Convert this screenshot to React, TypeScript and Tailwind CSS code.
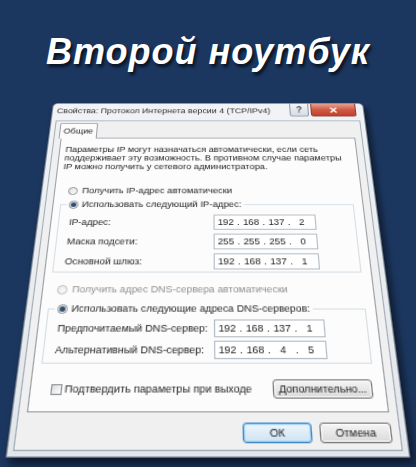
import React from "react";

function Radio({ checked = false, disabled = false }: { checked?: boolean; disabled?: boolean }) {
  return (
    <span
      className={
        "shrink-0 w-[9px] h-[9px] rounded-full border flex items-center justify-center bg-gradient-to-br " +
        (disabled ? "border-[#b8bcc0] from-[#ececec] to-[#fafafa]" : "border-[#8a9096] from-[#dedede] to-[#ffffff]")
      }
    >
      {checked && <span className="w-[5px] h-[5px] rounded-full bg-[#2f4f6f]" />}
    </span>
  );
}

function IpBox({ parts }: { parts: string[] }) {
  return (
    <div className="w-[93px] h-[16px] border border-[#b4bcc4] bg-white flex items-center pl-[1px] text-[#222]">
      {parts.map((p, i) => (
        <React.Fragment key={i}>
          <span className="w-[18px] text-center">{p}</span>
          {i < 3 && <span className="w-[5px] text-center">.</span>}
        </React.Fragment>
      ))}
    </div>
  );
}

function Row({ label, parts }: { label: string; parts: string[] }) {
  return (
    <div className="flex items-center h-[16px]">
      <span className="w-[131px] shrink-0">{label}</span>
      <IpBox parts={parts} />
    </div>
  );
}

function WinButton({ children, w, def = false }: { children: React.ReactNode; w: string; def?: boolean }) {
  return (
    <div
      className={
        "h-[16px] rounded-[3px] border flex items-center justify-center bg-gradient-to-b " +
        w +
        (def
          ? " border-[#3d86c6] from-[#eef6fc] to-[#cfe3f3] shadow-[inset_0_0_0_1px_#a8d8f5]"
          : " border-[#7a7a7a] from-[#f5f5f5] to-[#dadada] shadow-[inset_0_0_0_1px_#fbfbfb]")
      }
    >
      {children}
    </div>
  );
}

function Dialog() {
  return (
    <div className="w-[310px] h-[347px] shrink-0 origin-top [transform:perspective(921px)_rotateX(38.5deg)] flex flex-col border border-[#7f8a96] rounded-t-[5px] bg-gradient-to-b from-[#f1f3f6] to-[#e3e7eb] shadow-[3px_5px_6px_rgba(0,0,0,0.55)] font-['Liberation_Sans',Arial,sans-serif] text-[8.8px] leading-[12px] text-[#1c1c1c]">
      {/* title bar */}
      <div className="h-[21px] shrink-0 flex items-start">
        <span className="pl-[4px] pt-[3px] text-[#2a2a2a]">Свойства: Протокол Интернета версии 4 (TCP/IPv4)</span>
        <div className="ml-auto mr-[7px] flex gap-[2px]">
          <div className="w-[19px] h-[16px] rounded-b-[3px] border border-t-0 border-[#8d96a0] bg-gradient-to-b from-[#f4f6f8] to-[#d6dce2] flex items-center justify-center text-[10px] font-bold text-[#4a5560]">
            ?
          </div>
          <div className="w-[45px] h-[16px] rounded-b-[3px] border border-t-0 border-[#8e3b30] bg-gradient-to-b from-[#e7a190] via-[#cf5a45] to-[#c2402b] flex items-center justify-center text-[11px] font-bold text-white">
            ✕
          </div>
        </div>
      </div>

      {/* client */}
      <div className="mx-[4px] mb-[4px] flex-1 bg-[#f0f0f0] border border-[#a3adb8] px-[6px] pt-[2px] flex flex-col">
        <div className="flex h-[18px] relative z-10">
          <div className="-ml-[2px] w-[37px] h-[19px] bg-[#fcfcfc] border border-b-0 border-[#9aa0a6] rounded-t-[2px] flex items-center justify-center">
            Общие
          </div>
        </div>
        <div className="h-[269px] shrink-0 bg-[#fcfcfc] border border-[#9aa0a6] flex flex-col">
          <div className="pl-[5px] pt-[8px] leading-[10px]">
            <div>Параметры IP могут назначаться автоматически, если сеть</div>
            <div>поддерживает эту возможность. В противном случае параметры</div>
            <div>IP можно получить у сетевого администратора.</div>
          </div>

          <div className="mt-[16px] h-[12px] flex items-center pl-[12px] gap-[4px]">
            <Radio />
            <span>Получить IP-адрес автоматически</span>
          </div>

          <fieldset className="ml-[6px] mt-[3px] w-[270px] border border-[#d5dfe5] pb-[2px]">
            <legend className="ml-[5px] px-[2px]">
              <div className="flex items-center gap-[3px] h-[12px]">
                <Radio checked />
                <span>Использовать следующий IP-адрес:</span>
              </div>
            </legend>
            <div className="pl-[9px] pt-[5px] flex flex-col gap-[4px]">
              <Row label="IP-адрес:" parts={["192", "168", "137", "2"]} />
              <Row label="Маска подсети:" parts={["255", "255", "255", "0"]} />
              <Row label="Основной шлюз:" parts={["192", "168", "137", "1"]} />
            </div>
          </fieldset>

          <div className="mt-[10px] h-[12px] flex items-center pl-[12px] gap-[4px] text-[#8e8e8e]">
            <Radio disabled />
            <span>Получить адрес DNS-сервера автоматически</span>
          </div>

          <fieldset className="ml-[6px] mt-[6px] w-[270px] border border-[#d5dfe5] pb-[3px]">
            <legend className="ml-[5px] px-[2px]">
              <div className="flex items-center gap-[3px] h-[12px]">
                <Radio checked />
                <span>Использовать следующие адреса DNS-серверов:</span>
              </div>
            </legend>
            <div className="pl-[9px] pt-[4px] flex flex-col gap-[3px]">
              <Row label="Предпочитаемый DNS-сервер:" parts={["192", "168", "137", "1"]} />
              <Row label="Альтернативный DNS-сервер:" parts={["192", "168", "4", "5"]} />
            </div>
          </fieldset>

          <div className="mt-[13px] h-[16px] flex items-center pl-[16px] pr-[10px]">
            <span className="shrink-0 w-[9px] h-[9px] border border-[#8f949a] bg-gradient-to-br from-[#dcdcdc] to-white" />
            <span className="ml-[2px]">Подтвердить параметры при выходе</span>
            <div className="ml-auto">
              <WinButton w="w-[80px]">Дополнительно...</WinButton>
            </div>
          </div>
        </div>

        <div className="mt-[8px] flex justify-end gap-[6px]">
          <WinButton w="w-[54px]" def>
            ОК
          </WinButton>
          <WinButton w="w-[56px]">Отмена</WinButton>
        </div>
      </div>
    </div>
  );
}

export default function App() {
  return (
    <div className="w-[416px] h-[467px] overflow-hidden bg-[#1b365f] flex flex-col items-center">
      <div className="h-[103px] shrink-0 flex items-center justify-center">
        <h1 className="font-['Liberation_Sans',Arial,sans-serif] text-[36px] leading-[40px] font-bold italic text-white tracking-[1px] [text-shadow:2px_3px_3px_rgba(0,0,0,0.65)]">
          Второй ноутбук
        </h1>
      </div>
      <Dialog />
    </div>
  );
}
